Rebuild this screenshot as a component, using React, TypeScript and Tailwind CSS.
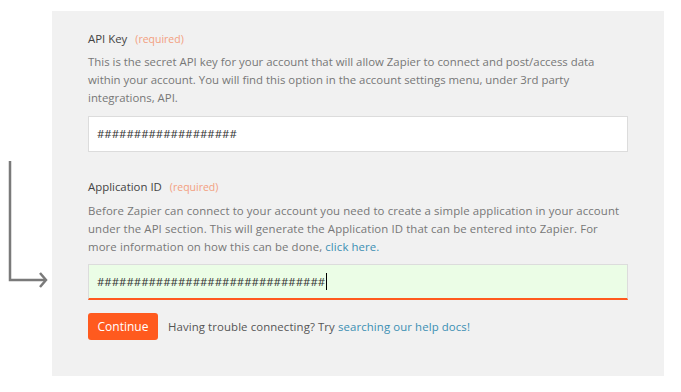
export default function App() {
  return (
    <div className="relative w-[681px] h-[392px] bg-white font-['Open_Sans',sans-serif] text-[11.4px]">
      {/* connector arrow pointing at the second field */}
      <svg className="absolute left-0 top-0" width="52" height="300" viewBox="0 0 52 300">
        <path d="M10 161 V280 H45" fill="none" stroke="#7a7a7a" strokeWidth="2.5" />
        <path d="M40 273 L46 280 L40 287" fill="none" stroke="#7a7a7a" strokeWidth="2.5" />
      </svg>

      <div className="absolute left-[52px] top-[11px] w-[612px] h-[365px] bg-[#f1f1f1] px-[36px] pt-[19px]">
        <div className="flex items-baseline leading-[18px]">
          <span className="text-[11.4px] text-[#444]">API Key</span>
          <span className="ml-[8px] text-[10.5px] text-[#f3a07f]">(required)</span>
        </div>
        <p className="mt-[5px] leading-[18px] text-[#777]">
          This is the secret API key for your account that will allow Zapier to connect and post/access data
          <br />
          within your account. You will find this option in the account settings menu, under 3rd party
          <br />
          integrations, API.
        </p>
        <div className="mt-[9px] h-[36px] bg-white border border-[#dcdcdc] flex items-center px-[8px] text-[#333]">
          ###################
        </div>

        <div className="mt-[26px] flex items-baseline leading-[18px]">
          <span className="text-[11.4px] text-[#444]">Application ID</span>
          <span className="ml-[8px] text-[10.5px] text-[#f3a07f]">(required)</span>
        </div>
        <p className="mt-[6px] leading-[18px] text-[#777] tracking-[0.1px]">
          Before Zapier can connect to your account you need to create a simple application in your account
          <br />
          under the API section. This will generate the Application ID that can be entered into Zapier. For
          <br />
          more information on how this can be done, <span className="text-[#3b8fb3]">click here.</span>
        </p>
        <div className="mt-[8px] h-[36px] bg-[#ebfde6] border border-[#dcdcdc] border-b-2 border-b-[#ff5a1e] flex items-center px-[8px] text-[#333]">
          <span>###############################</span>
          <span className="ml-px w-px h-[17px] bg-black" />
        </div>

        <div className="mt-[13px] flex items-center">
          <button className="h-[27px] w-[70px] rounded-[3px] bg-[#ff5a1e] text-white text-[12px]">Continue</button>
          <span className="ml-[10px] text-[#555] tracking-[0.1px]">
            Having trouble connecting? Try <span className="text-[#3b8fb3]">searching our help docs!</span>
          </span>
        </div>
      </div>
    </div>
  );
}
